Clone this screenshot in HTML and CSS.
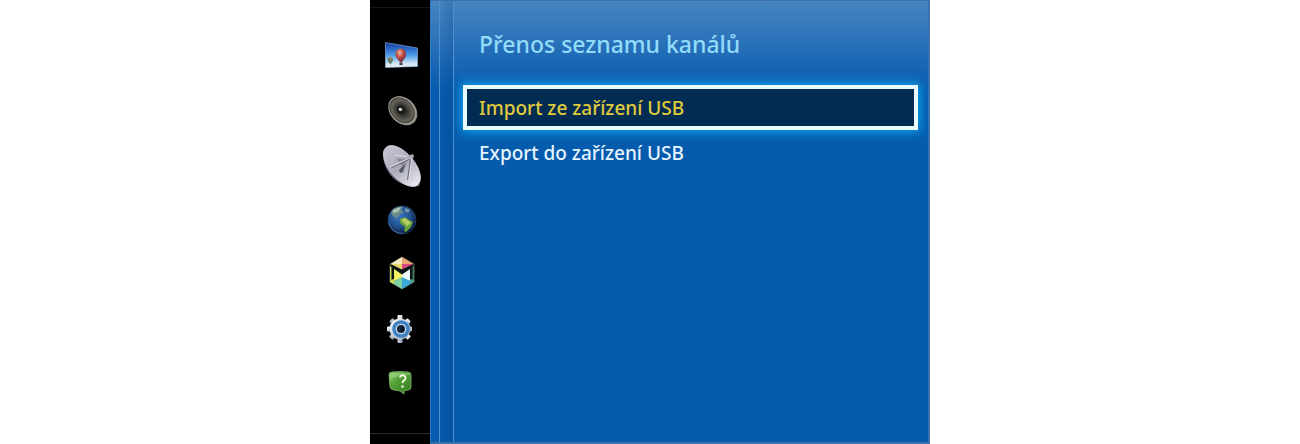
FILE: index.html
```
<!DOCTYPE html>
<html lang="cs">
<head>
    <meta charset="UTF-8">
    <meta name="viewport" content="width=device-width, initial-scale=1.0">
    <title>Přenos seznamu kanálů</title>
    <link rel="stylesheet" href="styles.css">
</head>
<body>
    <div class="tv-menu">
        <nav class="sidebar" aria-label="Menu">
            <button type="button" aria-label="Obraz">
                <svg viewBox="0 0 40 40">
                    <defs>
                        <linearGradient id="sky" x1="0" y1="0" x2="0" y2="1">
                            <stop offset="0" stop-color="#1238a8"/>
                            <stop offset=".5" stop-color="#4a9ae8"/>
                            <stop offset=".85" stop-color="#d5e8f5"/>
                            <stop offset="1" stop-color="#e6edf2"/>
                        </linearGradient>
                        <radialGradient id="balloon" cx=".4" cy=".3" r=".7">
                            <stop offset="0" stop-color="#f0b8a0"/>
                            <stop offset=".5" stop-color="#bc4c42"/>
                            <stop offset="1" stop-color="#702838"/>
                        </radialGradient>
                    </defs>
                    <path d="M3.500 7.500L35.500 13V31.500L3.500 32.500Z" fill="url(#sky)" stroke="#8fb8dc" stroke-width=".6"/>
                    <path d="M13.500 19C13.500 12 24 12 24 19C24 23 21 25 20 27H18C17 25 13.500 23 13.500 19Z" fill="url(#balloon)"/>
                    <rect x="17.500" y="27.500" width="3" height="2.500" fill="#4d3538"/>
                    <path d="M5.500 24.500C5.500 21 11 21 11 24.500C11 27 9 28 8.500 29.500C7.500 28 5.500 27 5.500 24.500Z" fill="#667f68"/>
                    <path d="M7 23H10" stroke="#c69a50"/>
                </svg>
            </button>
            <button type="button" aria-label="Zvuk">
                <svg viewBox="0 0 40 40">
                    <defs>
                        <radialGradient id="cone">
                            <stop offset="0" stop-color="#17171a"/>
                            <stop offset=".35" stop-color="#302f2c"/>
                            <stop offset=".8" stop-color="#66635a"/>
                            <stop offset="1" stop-color="#35332f"/>
                        </radialGradient>
                    </defs>
                    <g transform="rotate(47 20 21)">
                        <ellipse cx="20.500" cy="20" rx="16" ry="12.500" fill="#8a8982"/>
                        <ellipse cx="19.500" cy="20.500" rx="15" ry="11.500" fill="url(#cone)" stroke="#a3a29a" stroke-width="1"/>
                        <ellipse cx="18.500" cy="21" rx="4.500" ry="4" fill="#191919"/>
                    </g>
                    <circle cx="18.500" cy="19.500" r="1.800" fill="#b7b7b7"/>
                    <circle cx="18" cy="19" r=".9" fill="#fff"/>
                </svg>
            </button>
            <button type="button" aria-label="Kanál">
                <svg viewBox="0 0 40 40">
                    <defs>
                        <linearGradient id="dish" x1="0" y1="0" x2="1" y2="0">
                            <stop offset="0" stop-color="#c5c5d2"/>
                            <stop offset=".5" stop-color="#a9a9b9"/>
                            <stop offset="1" stop-color="#ececf3"/>
                        </linearGradient>
                    </defs>
                    <path d="M1 6C0 18 5 30 15 37C24 43 34 44 38 41Z" fill="#6c6c80"/>
                    <ellipse cx="20" cy="22" rx="24.500" ry="12.500" transform="rotate(50 20 22)" fill="url(#dish)" stroke="#d5d5df" stroke-width=".8"/>
                    <path d="M14 14L22 15L28 14L19 23L16 28L20 22Z" fill="#8b8b9c"/>
                    <path d="M17 26L24 19L21 28L18 29Z" fill="#57576a"/>
                    <path d="M8 23L30 13L13 11M30 13L27 36" fill="none" stroke="#dadae3" stroke-width="1.200"/>
                    <path d="M9 24L29 14.500M28.500 15L25.500 36" fill="none" stroke="#5b5b6d" stroke-width=".9"/>
                    <path d="M25 12L31 10L32 13L28 16Z" fill="#aaa9b7"/>
                </svg>
            </button>
            <button type="button" aria-label="Síť">
                <svg viewBox="0 0 40 40">
                    <defs>
                        <radialGradient id="ocean" cx=".4" cy=".35" r=".65">
                            <stop offset="0" stop-color="#3b79c5"/>
                            <stop offset=".6" stop-color="#22518f"/>
                            <stop offset="1" stop-color="#0b1b3d"/>
                        </radialGradient>
                    </defs>
                    <circle cx="20" cy="21" r="14" fill="url(#ocean)" stroke="#2b4b75" stroke-width=".6"/>
                    <path d="M9 13C11 9 16 7 21 8L19 11L22 13L18 15L16 18L13 18L17 22L14 20L10 16Z" fill="#6c8c85"/>
                    <path d="M11 11L19 8L16 13L11 14Z" fill="#b1c3b4"/>
                    <path d="M23 9L28 11L26 14L23 12Z" fill="#7499a9"/>
                    <path d="M18 20L23 18L27 21L31 23L29 28L24 33L22 32L23 28L18 24Z" fill="#68a33f"/>
                    <path d="M19 21L23 19L27 22L29 24L25 27Z" fill="#b3cf62"/>
                    <path d="M7 24C9 31 15 35 21 34" fill="none" stroke="#568ac0" stroke-width=".7"/>
                </svg>
            </button>
            <button type="button" aria-label="Smart Hub">
                <svg viewBox="0 0 40 40">
                    <path d="M20 4L32 11V29L20 36L8 29V11Z" fill="#0b1413" stroke="#84908a" stroke-width=".6"/>
                    <path d="M20 4L8.500 11L20 11Z" fill="#f4ebc0"/>
                    <path d="M20 4L31.500 11L20 11Z" fill="#eda472"/>
                    <path d="M8.500 11H20V16.500Z" fill="#ecd66b"/>
                    <path d="M31.500 11H20V16.500Z" fill="#d64784"/>
                    <path d="M12 16L20 21.500V25L12 28Z" fill="#f3f060"/>
                    <path d="M8 27L12 26V31.200L8 29Z" fill="#c7d850"/>
                    <path d="M12 28L20 24V36L12 31.200Z" fill="#7fd0a0"/>
                    <path d="M8 13L9.500 14V27L8 27Z" fill="#cbd35a"/>
                    <path d="M28 16L20 21.500V25L28 28Z" fill="#f0fafa"/>
                    <path d="M28 28L20 24V36L28 31.200Z" fill="#38a9d9"/>
                    <path d="M28 26L32 27V29L28 31.200Z" fill="#4e9f93"/>
                    <path d="M32 13L30.500 14V27L32 27Z" fill="#477f5e"/>
                </svg>
            </button>
            <button type="button" aria-label="Systém">
                <svg viewBox="0 0 40 40">
                    <defs>
                        <linearGradient id="gear" x1="0" y1="0" x2="1" y2="1">
                            <stop offset="0" stop-color="#fff"/>
                            <stop offset="1" stop-color="#8b9daf"/>
                        </linearGradient>
                    </defs>
                    <g fill="url(#gear)">
                        <rect x="15.500" y="7" width="5" height="28" rx="1"/>
                        <rect x="15.500" y="8" width="5" height="26" rx="1" transform="rotate(45 18 21)"/>
                        <rect x="5" y="18.500" width="25" height="5" rx="1"/>
                        <rect x="15.500" y="8" width="5" height="26" rx="1" transform="rotate(135 18 21)"/>
                        <circle cx="18" cy="21" r="10.500"/>
                    </g>
                    <circle cx="19" cy="21" r="7" fill="none" stroke="#4180c3" stroke-width="3.500"/>
                    <circle cx="19" cy="21" r="4.600" fill="#0b1727" stroke="#b9d8f3" stroke-width="1.400"/>
                    <path d="M20 17C17 18 17 23 19 25" fill="none" stroke="#2a4870"/>
                </svg>
            </button>
            <button type="button" aria-label="Podpora">
                <svg viewBox="0 0 40 40">
                    <defs>
                        <linearGradient id="bubble" x1="0" y1="0" x2="1" y2="1">
                            <stop offset="0" stop-color="#8ccc69"/>
                            <stop offset=".4" stop-color="#529f37"/>
                            <stop offset="1" stop-color="#347c20"/>
                        </linearGradient>
                    </defs>
                    <path d="M10 10Q19 9 26 10Q29 10 29 13V25Q29 28 26 28L22 29L22 32L18 29L12 28Q9 28 8 25L7 13Q7 10 10 10Z" fill="url(#bubble)" stroke="#80b967" stroke-width=".8"/>
                    <path d="M8 18Q14 13 28 13V12Q28 11 25 11H11Q8 11 8 13Z" fill="#c6edaf" opacity=".35"/>
                    <path d="M18 15.500C19 12 24 13 23.500 16.500C23 19 20.500 18 20.500 21" fill="none" stroke="#edf9df" stroke-width="2"/>
                    <circle cx="20.500" cy="24.500" r="1.300" fill="#edf9df"/>
                </svg>
            </button>
        </nav>

        <main class="panel">
            <div class="edge"></div>
            <div class="content">
                <h1>Přenos seznamu kanálů</h1>
                <button type="button" class="item selected">Import ze zařízení USB</button>
                <button type="button" class="item">Export do zařízení USB</button>
            </div>
        </main>
    </div>
</body>
</html>
```
FILE: styles.css
```
* {
    box-sizing: border-box;
}

body {
    margin: 0;
    background-color: #fff;
    font-family: "Noto Sans", sans-serif;
}

.tv-menu {
    display: flex;
    width: 100%;
    max-width: 560px;
    min-height: 100vh;
    margin: 0 auto;
    background-color: #000;
}

/* Icon column */
.sidebar {
    display: flex;
    flex-direction: column;
    align-items: center;
    justify-content: space-between;
    flex: 0 0 60px;
    padding: 28px 0 32px 4px;
    border-top: 7px solid #000;
    border-bottom: 10px solid #000;
    background: linear-gradient(#151515, #151515) top / 100% 1px no-repeat,
                linear-gradient(#2a2a2a, #2a2a2a) bottom / 100% 1px no-repeat;
}

.sidebar button {
    width: 40px;
    height: 40px;
    padding: 0;
    border: none;
    background: none;
    cursor: pointer;
}

.sidebar svg {
    display: block;
    width: 100%;
    height: 100%;
    overflow: visible;
}

/* Blue panel */
.panel {
    display: flex;
    flex: 1;
    border: 1px solid #3c70a8;
    border-width: 1px 2px 2px 1px;
    border-left-color: #2f7cc6;
    background: linear-gradient(#4584c0 0, #3478bb 28px, #1c68b6 60px, #065bac 90px, #065bac 100%);
}

/* Stacked page edges on the left */
.edge {
    flex: 0 0 23px;
    border-right: 1px solid #4c90cf;
    background: linear-gradient(#4c90cf, #4c90cf) 8px 0 / 1px 100% no-repeat,
                linear-gradient(90deg, rgba(0, 50, 120, 0) 9px, rgba(0, 50, 120, 0.2) 22px);
}

.content {
    display: flex;
    flex: 1;
    flex-direction: column;
    padding: 0 10px 0 9px;
}

.content h1 {
    margin: 0;
    padding: 26px 16px 24px;
    color: #92dcfa;
    font-size: 23px;
    font-weight: 500;
    line-height: 34px;
}

.item {
    height: 45px;
    padding: 0 12px;
    border: 4px solid transparent;
    background: none;
    color: #e6f4ff;
    font-family: inherit;
    font-size: 19px;
    font-weight: 500;
    line-height: 28px;
    text-align: left;
    cursor: pointer;
}

.item.selected {
    border-color: #e8fbff;
    background-color: #032c52;
    box-shadow: 0 0 10px 2px #0fa5ee;
    color: #e0cb3c;
}
```
